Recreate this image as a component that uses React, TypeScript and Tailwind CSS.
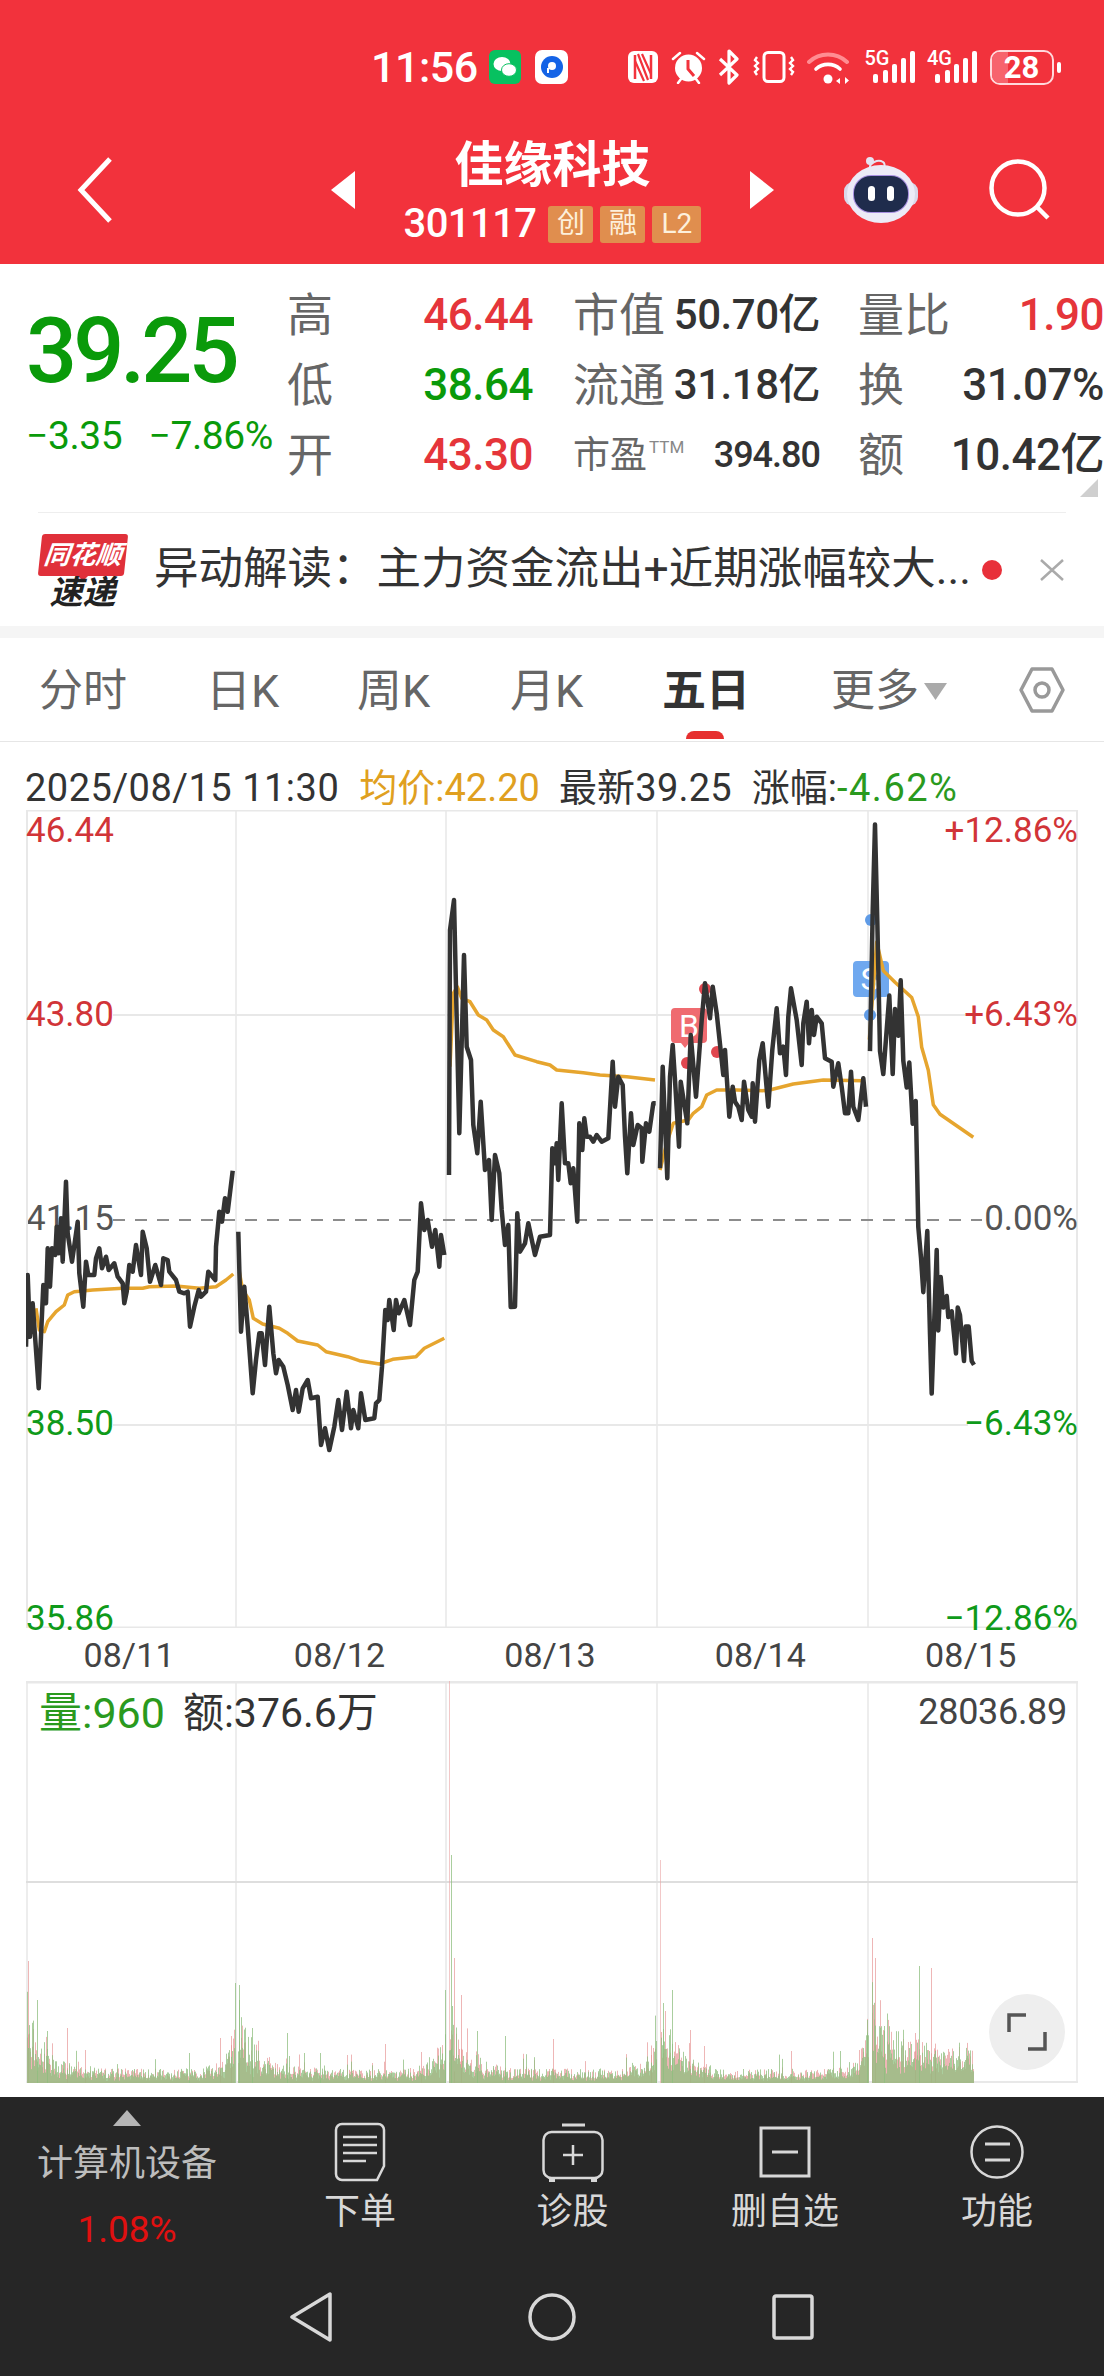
import React from "react"

const RED = "#f2323c"

// traced chart data, each block is in the pixel space of the crop it was read from
const day1 = [0,620,5,405,12,590,20,490,28,600,38,745,45,590,52,435,60,490,65,325,72,440,78,325,88,345,92,260,98,340,105,235,110,365,120,125,125,280,138,365,155,245,160,400,172,500,180,365,187,405,205,405,210,355,220,325,228,385,240,350,248,390,265,370,275,410,290,430,295,490,302,455,310,375,320,395,330,315,345,405,350,275,362,325,372,425,388,375,395,400,405,435,412,355,425,360,430,395,450,420,460,455,475,460,485,455,492,560,505,500,518,450,525,470,540,455,547,395,568,420,570,320,580,215,588,245,597,175,605,215,620,92]
const day2 = [637,275,645,575,655,440,665,560,680,760,690,660,700,580,707,580,717,675,730,500,742,640,750,700,758,660,772,680,785,735,800,810,810,750,818,815,830,745,845,720,855,775,875,770,885,915,897,865,910,930,925,860,937,780,948,870,962,755,975,865,982,810,997,865,1005,760,1018,840,1045,835,1050,790,1060,780,1068,680,1078,510,1085,540,1090,480,1103,570,1110,480,1118,520,1135,480,1152,555,1165,420,1175,395,1185,190,1195,270,1205,240,1218,320,1228,270,1240,380,1245,285,1255,345]
const day3 = [27,885,30,150,42,60,58,760,72,225,80,500,93,540,100,735,112,820,122,665,135,870,147,840,155,1020,165,825,178,880,185,990,195,1095,205,1035,212,1281,225,1280,232,1000,240,1115,255,1090,265,1030,285,1125,300,1070,330,1065,337,805,345,850,350,790,355,900,365,670,375,850,385,850,392,910,400,865,412,1025,418,730,427,810,433,715,440,770,450,770,460,785,470,765,485,785,505,775,518,545,525,680,535,590,548,615,555,770,562,880,573,700,580,795,593,735,605,745,607,845,618,730,628,755,640,670,647,670]
const day4 = [660,865,668,560,682,895,690,590,698,495,705,600,717,800,722,605,742,730,752,465,768,650,785,420,795,310,810,415,818,320,830,400,850,585,855,510,868,710,878,620,885,665,895,680,905,720,912,605,925,690,935,710,938,610,945,725,958,540,968,490,985,680,997,510,1010,385,1020,520,1030,500,1038,585,1045,410,1053,325,1070,420,1085,555,1090,430,1100,365,1107,490,1115,390,1122,465,1130,410,1145,430,1155,535,1175,545,1180,620,1195,550,1205,620,1215,700,1225,700,1233,575,1240,680,1255,720,1270,595,1278,680]
const day5 = [60,630,68,265,75,38,82,290,90,630,100,690,118,485,128,690,135,520,145,590,152,445,160,655,170,725,178,660,188,820,197,760,205,1090,213,1170,220,1260,232,1100,240,1370,245,1525,260,1150,265,1360,272,1220,280,1300,290,1270,295,1325,305,1310,318,1420,323,1300,330,1320,342,1440,347,1350,356,1350,365,1440,372,1450]

const avg1 = [30,505,40,570,55,575,65,545,90,515,115,495,125,465,145,455,200,450,290,445,350,445,370,440,450,438,520,445,570,440,600,420,622,402]
const avg2 = [640,395,650,450,670,480,682,535,710,552,760,565,785,580,815,603,875,615,900,635,965,650,1000,662,1060,672,1100,658,1170,650,1195,625,1255,595]
const avg3 = [30,560,40,340,52,320,65,355,90,365,115,405,140,420,160,450,190,470,225,525,290,545,330,555,350,570,430,578,480,585,560,590,645,600]
const avg4 = [660,870,680,790,700,730,745,720,760,700,785,680,800,645,830,630,890,630,980,632,1060,612,1150,600,1270,602]
const avg5 = [58,600,80,345,100,420,135,450,185,490,205,540,215,620,235,680,250,770,270,795,370,855]

const toPoints = (pts: number[], ox: number, oy: number, sx: number, sy: number) => {
  const out: string[] = []
  for (let i = 0; i < pts.length; i += 2) {
    out.push(`${(ox + pts[i] / sx).toFixed(1)},${(oy + pts[i + 1] / sy).toFixed(1)}`)
  }
  return out.join(" ")
}

const priceLines = [
  toPoints(day1, 26, 1140, 3, 3),
  toPoints(day2, 26, 1140, 3, 3),
  toPoints(day3, 440, 880, 3, 3),
  toPoints(day4, 440, 880, 3, 3),
  toPoints(day5, 850, 810, 3, 2.613),
]
const avgLines = [
  toPoints(avg1, 26, 1140, 3, 3),
  toPoints(avg2, 26, 1140, 3, 3),
  toPoints(avg3, 440, 880, 3, 3),
  toPoints(avg4, 440, 880, 3, 3),
  toPoints(avg5, 850, 810, 3, 2.613),
]

// big volume bars read off the reference: x, height, red?
const spikes: [number, number, boolean][] = [
  [28, 122, true], [37, 83, false], [47, 52, false], [67, 55, true], [85, 33, true], [189, 30, false], [220, 45, true], [231, 47, true],
  [235, 100, false], [239, 98, false], [252, 55, false], [287, 50, false], [320, 30, false], [385, 39, true], [421, 31, true], [445, 93, false],
  [451, 228, false], [454, 125, true], [461, 88, true], [477, 52, false], [505, 47, false], [553, 44, true], [651, 28, true],
  [656, 42, false], [663, 80, false], [672, 93, false], [690, 53, true], [704, 37, true], [791, 32, true], [859, 33, true],
  [867, 63, false], [872, 145, true], [875, 125, true], [884, 57, false], [915, 50, true], [919, 117, false], [931, 115, true], [935, 33, true],
]

const buildVolume = () => {
  let seed = 41
  const rnd = () => {
    seed = (seed * 1103515245 + 12345) & 0x7fffffff
    return seed / 0x7fffffff
  }
  const dayStarts = [27, 238, 449, 661, 872]
  let green = ""
  let red = ""
  for (let x = 27; x < 974; x++) {
    const idx = x < 238 ? 0 : x < 449 ? 1 : x < 661 ? 2 : x < 872 ? 3 : 4
    const start = dayStarts[idx]
    const end = start + 207
    if (x > end && idx < 4) continue
    const open = 48 * Math.exp(-(x - start) / 16)
    const close = idx < 4 ? 26 * Math.exp(-(end - x) / 10) : 16
    const bump = rnd() > 0.93 ? 10 : 0
    const h = (9 + bump + open + close) * (0.5 + rnd() * 1.1)
    const h2 = h * (0.4 + rnd() * 0.5)
    const seg = `M${x + 0.5} 2083V${(2083 - h).toFixed(1)}`
    const seg2 = `M${x + 0.5} 2083V${(2083 - h2).toFixed(1)}`
    if (rnd() > 0.45) {
      green += seg
      red += seg2
    } else {
      red += seg
      green += seg2
    }
  }
  spikes.forEach(([x, h, isRed]) => {
    const seg = `M${x + 0.5} 2083V${2083 - h}`
    if (isRed) red += seg
    else green += seg
  })
  return { green, red }
}
const volume = buildVolume()

const NfcIcon = () => (
  <svg width="30" height="32" viewBox="0 0 30 32">
    <rect width="30" height="32" rx="6" fill="#fff" />
    <path d="M7 4v24M23 4v24" stroke={RED} strokeWidth="2.5" />
    <path d="M10 3l10 26M14 3l9 20M7 10l9 20" stroke={RED} strokeWidth="2.2" />
  </svg>
)

const AlarmIcon = () => (
  <svg width="35" height="34" viewBox="0 0 35 34">
    <circle cx="17.5" cy="18" r="13.5" fill="#fff" />
    <path d="M17 10v9l6 7" fill="none" stroke={RED} strokeWidth="3" />
    <path d="M2 9l7-6M33 9l-7-6M7 33l3-4M28 33l-3-4" stroke="#fff" strokeWidth="2.5" strokeLinecap="round" />
  </svg>
)

const BluetoothIcon = () => (
  <svg width="22" height="36" viewBox="0 0 22 36">
    <path d="M2 10l17 16-8 8V2l8 8L2 26" fill="none" stroke="#fff" strokeWidth="3.2" strokeLinejoin="round" />
  </svg>
)

const VibrateIcon = () => (
  <svg width="42" height="32" viewBox="0 0 42 32">
    <rect x="11" y="1.5" width="20" height="29" rx="4" fill="none" stroke="#fff" strokeWidth="3" />
    <path d="M4 6l-2 3 3 3-3 3 3 3-3 3 2 3M38 6l2 3-3 3 3 3-3 3 3 3-2 3" fill="none" stroke="#fff" strokeWidth="2.4" />
  </svg>
)

const WifiIcon = () => (
  <svg width="45" height="34" viewBox="0 0 45 34">
    <path d="M2 12a28 28 0 0 1 38 0" fill="none" stroke="#ff8d92" strokeWidth="4" strokeLinecap="round" />
    <path d="M9 19a18 18 0 0 1 24 0" fill="none" stroke="#fff" strokeWidth="3.6" strokeLinecap="round" />
    <circle cx="21" cy="29" r="4.5" fill="#fff" />
    <path d="M33 28l-4 3 4 3zM38 34v-7l4 3.500z" fill="#fff" />
  </svg>
)

const Signal = ({ label }: { label: string }) => (
  <div className="relative w-[50px] h-[34px]">
    <span className="absolute left-0 -top-[1px] text-[20px] leading-[18px] font-medium text-white">{label}</span>
    <svg width="50" height="34" viewBox="0 0 50 34" className="absolute inset-0">
      <rect x="8" y="24" width="5" height="9" rx="2" fill="#fff" />
      <rect x="18" y="20" width="5" height="13" rx="2" fill="#fff" />
      <rect x="27" y="14" width="5" height="19" rx="2" fill="#fff" />
      <rect x="36" y="8" width="5" height="25" rx="2" fill="#fff" />
      <rect x="45" y="1" width="5" height="32" rx="2" fill="#fff" />
    </svg>
  </div>
)

const Battery = () => (
  <div className="flex items-center gap-[3px]">
    <div className="relative w-[64px] h-[35px] rounded-[10px] border-2 border-[#ffd9dc] overflow-hidden flex items-center justify-center">
      <div className="absolute left-0 top-0 bottom-0 w-[28%] bg-[#f7636d]" />
      <span className="relative text-[31px] leading-none font-bold text-white">28</span>
    </div>
    <div className="w-[4px] h-[11px] rounded-full bg-white" />
  </div>
)

const Robot = () => (
  <svg width="74" height="68" viewBox="0 0 74 68">
    <path d="M26 12c-1-5 8-9 13-6 2 1 2 4 1 8" fill="none" stroke="#e6e4f2" strokeWidth="2" />
    <circle cx="26" cy="5" r="4" fill="#e6e4f2" />
    <rect x="0" y="26" width="74" height="24" rx="9" fill="#d9d8ea" />
    <ellipse cx="37" cy="38" rx="34" ry="29" fill="#ecebf7" />
    <rect x="9" y="19" width="56" height="38" rx="18" fill="#a78fe0" />
    <rect x="10" y="20" width="54" height="36" rx="17" fill="#1f2c4c" />
    <rect x="24" y="30" width="7" height="15" rx="3.500" fill="#fff" />
    <rect x="43" y="30" width="7" height="15" rx="3.500" fill="#fff" />
  </svg>
)

const Triangle = ({ right }: { right?: boolean }) => (
  <svg width="24" height="38" viewBox="0 0 24 38">
    <path d={right ? "M0 0L24 19L0 38z" : "M24 0L0 19L24 38z"} fill="#fff" />
  </svg>
)

const Badge = ({ text, w }: { text: string; w: string }) => (
  <span className={`${w} h-[37px] rounded-[3px] bg-[#e08e4e] text-[#fdf0dc] text-[28px] leading-none flex items-center justify-center`}>{text}</span>
)

const Header = () => (
  <div className="h-[264px] bg-[#f2323c] text-white">
    <div className="flex items-center h-[34px] mt-[50px] pl-[371px] absolute top-0 left-0">
      <span className="text-[43px] leading-none font-medium w-[107px] tracking-[-0.5px]">11:56</span>
      <div className="ml-[11px] w-[32px] h-[34px] rounded-[6px] bg-[#07c160] flex items-center justify-center">
        <svg width="24" height="22" viewBox="0 0 24 22">
          <ellipse cx="9" cy="8" rx="8.500" ry="7" fill="#fff" />
          <ellipse cx="16" cy="14" rx="7.500" ry="6.300" fill="#fff" stroke="#07c160" strokeWidth="1" />
        </svg>
      </div>
      <div className="ml-[14px] w-[33px] h-[34px] rounded-[7px] bg-white flex items-center justify-center">
        <svg width="24" height="24" viewBox="0 0 24 24">
          <circle cx="12" cy="12" r="11" fill="#1463e6" />
          <circle cx="12" cy="11" r="4" fill="#fff" />
          <path d="M8 13v5" stroke="#fff" strokeWidth="2" />
        </svg>
      </div>
      <div className="ml-[60px] flex items-center gap-[12.500px]">
        <NfcIcon />
        <AlarmIcon />
        <BluetoothIcon />
        <VibrateIcon />
        <WifiIcon />
        <Signal label="5G" />
        <Signal label="4G" />
        <Battery />
      </div>
    </div>
    <div className="flex items-center pt-[136px]">
      <svg width="36" height="66" viewBox="0 0 36 66" className="ml-[77px]">
        <path d="M33 2L4 33L33 64" fill="none" stroke="#fff" strokeWidth="5" />
      </svg>
      <div className="ml-[218px]">
        <Triangle />
      </div>
      <div className="w-[395px] flex flex-col items-center">
        <div className="text-[49px] leading-[60px] font-bold">佳缘科技</div>
        <div className="flex items-center mt-[8px]">
          <span className="text-[40px] leading-[40px] font-medium tracking-[-0.6px] mr-[12px]">301117</span>
          <div className="flex gap-[7px]">
            <Badge text="创" w="w-[45px]" />
            <Badge text="融" w="w-[45px]" />
            <Badge text="L2" w="w-[49px]" />
          </div>
        </div>
      </div>
      <Triangle right />
      <div className="ml-[70px]">
        <Robot />
      </div>
      <svg width="62" height="62" viewBox="0 0 62 62" className="ml-[71px]">
        <circle cx="29" cy="29" r="26.500" fill="none" stroke="#fff" strokeWidth="4.500" />
        <path d="M47 47l12 12" stroke="#fff" strokeWidth="4.500" />
      </svg>
    </div>
  </div>
)

const Cell = ({ label, value, valueCls, labelCls }: { label: React.ReactNode; value: string; valueCls: string; labelCls?: string }) => (
  <div className="flex items-center justify-between h-[70px]">
    <span className={labelCls ?? "text-[46px] leading-none text-[#666]"}>{label}</span>
    <span className={valueCls}>{value}</span>
  </div>
)

const red = "text-[44px] leading-none font-medium text-[#e5353a] tracking-[-0.5px]"
const green = "text-[44px] leading-none font-medium text-[#0a9a0a] tracking-[-0.5px]"
const dark = "text-[42px] leading-none text-[#333] font-medium tracking-[-0.5px]"
const darkWide = "text-[44px] leading-none text-[#333] font-medium tracking-[-0.5px]"

const Quote = () => (
  <div className="relative h-[248px] flex">
    <div className="w-[287px] pl-[26px] pt-[43px]">
      <div className="text-[90px] leading-none font-medium text-[#0a9a0a] tracking-[-4px]">39.25</div>
      <div className="flex justify-between w-[247px] mt-[20px] text-[39px] leading-none text-[#0a9a0a] tracking-[-0.4px]">
        <span>−3.35</span>
        <span>−7.86%</span>
      </div>
    </div>
    <div className="pt-[16px] flex">
      <div className="w-[246px]">
        <Cell label="高" value="46.44" valueCls={red} />
        <Cell label="低" value="38.64" valueCls={green} />
        <Cell label="开" value="43.30" valueCls={red} />
      </div>
      <div className="w-[247px] ml-[40px]">
        <Cell label="市值" value="50.70亿" valueCls={dark} />
        <Cell label="流通" value="31.18亿" valueCls={dark} />
        <Cell
          label={
            <span className="flex items-start">
              <span className="text-[37px] leading-none text-[#666]">市盈</span>
              <span className="text-[17px] leading-none text-[#888] ml-[2px] mt-[2px]">TTM</span>
            </span>
          }
          value="394.80"
          valueCls="text-[36px] leading-none text-[#333] font-medium tracking-[-1px]"
        />
      </div>
      <div className="w-[246px] ml-[38px]">
        <Cell label="量比" value="1.90" valueCls={red} />
        <Cell label="换" value="31.07%" valueCls={darkWide} />
        <Cell label="额" value="10.42亿" valueCls={darkWide} />
      </div>
    </div>
    <svg width="18" height="18" viewBox="0 0 18 18" className="absolute right-[6px] bottom-[15px]">
      <path d="M18 0V18H0z" fill="#cfcfcf" />
    </svg>
  </div>
)

const Ticker = () => (
  <div className="h-[113px] flex items-center pl-[38px] relative">
    <div className="w-[89px] h-[72px] flex flex-col items-center">
      <div className="w-[86px] h-[42px] -skew-x-[6deg] rounded-[3px] bg-[#e0303a] text-white text-[26px] leading-[42px] font-bold italic text-center whitespace-nowrap">同花顺</div>
      <div className="w-0 h-0 border-x-[5px] border-x-transparent border-t-[5px] border-t-[#e0303a]" />
      <div className="text-[33px] leading-[30px] font-bold italic text-[#222] -mt-[3px] whitespace-nowrap">速递</div>
    </div>
    <span className="ml-[27px] text-[44.500px] leading-none text-[#333] whitespace-nowrap w-[813px]">异动解读：主力资金流出+近期涨幅较大...</span>
    <div className="ml-[15px] w-[20px] h-[20px] rounded-full bg-[#e8303a]" />
    <svg width="26" height="24" viewBox="0 0 26 24" className="ml-[37px]">
      <path d="M2 2l22 20M24 2L2 22" stroke="#aaa" strokeWidth="2.500" />
    </svg>
  </div>
)

const Tabs = () => (
  <div className="h-[104px] flex items-start border-b border-[#e6e6e6]">
    <span className="ml-[39px] w-[167px] mt-[31px] text-[44px] leading-none text-[#666]">分时</span>
    <span className="w-[151px] mt-[31px] text-[45px] leading-none text-[#666]">日K</span>
    <span className="w-[153px] mt-[31px] text-[45px] leading-none text-[#666]">周K</span>
    <span className="w-[152px] mt-[31px] text-[45px] leading-none text-[#666]">月K</span>
    <div className="w-[169px] mt-[31px] flex flex-col items-start">
      <span className="text-[44px] leading-none font-bold text-[#333]">五日</span>
      <div className="ml-[24px] mt-[18px] w-[38px] h-[8px] rounded-t-full rounded-b-[2px] bg-[#e6302f]" />
    </div>
    <span className="mt-[31px] text-[44px] leading-none text-[#666]">更多</span>
    <svg width="23" height="17" viewBox="0 0 23 17" className="ml-[5px] mt-[45px]">
      <path d="M0 0H23L11.500 17z" fill="#aaa" />
    </svg>
    <svg width="46" height="48" viewBox="0 0 46 48" className="ml-[72px] mt-[28px]">
      <path d="M13 3H33L44 24L33 45H13L2 24z" fill="none" stroke="#999" strokeWidth="3.500" strokeLinejoin="round" />
      <circle cx="23" cy="24" r="7" fill="none" stroke="#999" strokeWidth="3.500" />
    </svg>
  </div>
)

const InfoRow = () => (
  <div className="h-[68px] pl-[25px] pt-[27px] flex text-[38px] leading-none text-[#333] whitespace-nowrap">
    <span className="tracking-[0.5px]">2025/08/15 11:30</span>
    <span className="ml-[20px] text-[#e0a020]">均价:42.20</span>
    <span className="ml-[19px] tracking-[0.2px]">最新39.25</span>
    <span className="ml-[20px]">涨幅:<span className="text-[#2a9a1e] tracking-[1.500px]">-4.62%</span></span>
  </div>
)

const axisCls = "absolute z-10 text-[35px] leading-none"

const PriceChart = () => (
  <div className="relative ml-[26px] w-[1052px] h-[818px]">
    <span className={`${axisCls} left-0 top-[3px] text-[#d13438]`}>46.44</span>
    <span className={`${axisCls} left-0 top-[187px] text-[#d13438]`}>43.80</span>
    <span className="absolute left-0 top-[391px] text-[35px] leading-none text-[#555]">41.15</span>
    <span className={`${axisCls} left-0 top-[596px] text-[#0f9a1a]`}>38.50</span>
    <span className={`${axisCls} left-0 top-[791px] text-[#0f9a1a]`}>35.86</span>
    <span className={`${axisCls} right-0 top-[3px] text-[#d13438]`}>+12.86%</span>
    <span className={`${axisCls} right-0 top-[187px] text-[#d13438]`}>+6.43%</span>
    <span className={`${axisCls} right-0 top-[391px] text-[#555]`}>0.00%</span>
    <span className={`${axisCls} right-0 top-[596px] text-[#0f9a1a]`}>−6.43%</span>
    <span className={`${axisCls} right-0 top-[791px] text-[#0f9a1a]`}>−12.86%</span>
    <svg width="1052" height="818" viewBox="26 810 1052 818" className="absolute inset-0">
      <g stroke="#e8e8e8" strokeWidth="2" fill="none">
        <path d="M27 810V1628M1077 810V1628" />
        <path d="M26 810H1078" strokeWidth="3" />
        <path d="M26 1628H1078" strokeWidth="3" />
        <path d="M236 810V1628M446 810V1628M657 810V1628M868 810V1628" strokeWidth="1.500" />
        <path d="M113 1015H965M113 1425H968" />
      </g>
      <path d="M113 1220H982" stroke="#8c8c8c" strokeWidth="2" strokeDasharray="12 10" />
      <path d="M675 1008h28a4 4 0 0 1 4 4v27a4 4 0 0 1-4 4h-14l-4 5-4-5h-6a4 4 0 0 1-4-4v-27a4 4 0 0 1 4-4z" fill="#ef6b70" />
      <text x="689" y="1037" fontSize="32" fill="#fff" textAnchor="middle" fontFamily="Roboto, sans-serif">B</text>
      <circle cx="687" cy="1063" r="6" fill="#e0474f" />
      <circle cx="717" cy="1052" r="6" fill="#e0474f" />
      <circle cx="705" cy="989" r="6" fill="#e0474f" />
      <path d="M857 961h28a4 4 0 0 1 4 4v28a4 4 0 0 1-4 4h-8l-4 5-4-5h-12a4 4 0 0 1-4-4v-28a4 4 0 0 1 4-4z" fill="#6fa8ef" />
      <text x="870" y="990" fontSize="32" fill="#fff" textAnchor="middle" fontFamily="Roboto, sans-serif">S</text>
      <circle cx="871" cy="920" r="6" fill="#5f9be6" />
      <circle cx="870" cy="1015" r="6" fill="#5f9be6" />
      {avgLines.map((pts, i) => (
        <polyline key={i} points={pts} fill="none" stroke="#e6a52e" strokeWidth="3.500" strokeLinejoin="round" />
      ))}
      {priceLines.map((pts, i) => (
        <polyline key={i} points={pts} fill="none" stroke="#333" strokeWidth="4.500" strokeLinejoin="round" />
      ))}
    </svg>
  </div>
)

const DateAxis = () => (
  <div className="ml-[24px] w-[1052px] h-[53px] grid grid-cols-5 items-center text-center text-[34px] leading-none text-[#444] tracking-[0.2px]">
    <span>08/11</span>
    <span>08/12</span>
    <span>08/13</span>
    <span>08/14</span>
    <span>08/15</span>
  </div>
)

const VolumeChart = () => (
  <div className="relative ml-[26px] w-[1052px] h-[402px]">
    <svg width="1052" height="402" viewBox="26 1681 1052 402" className="absolute inset-0">
      <g stroke="#e8e8e8" strokeWidth="1.500" fill="none">
        <path d="M27 1681V2083M1077 1681V2083M236 1681V2083M446 1681V2083M657 1681V2083M868 1681V2083" />
        <path d="M26 1682H1078" strokeWidth="3" />
        <path d="M26 1882H1078" stroke="#dedede" strokeWidth="2" />
        <path d="M26 2082H1078" strokeWidth="2" />
      </g>
      <path d="M449.500 2083V1681M660.500 2083V1860" stroke="#eaa3a3" strokeOpacity="0.6" strokeWidth="1" fill="none" />
      <path d={volume.red} stroke="#e58f8f" strokeOpacity="0.65" strokeWidth="1" fill="none" />
      <path d={volume.green} stroke="#8dbd7e" strokeOpacity="0.75" strokeWidth="1" fill="none" />
    </svg>
    <div className="absolute left-[13px] top-[11px] flex items-center leading-none whitespace-nowrap">
      <span className="text-[43px] leading-none text-[#2a9a1e]">量:960</span>
      <span className="ml-[18px] text-[41px] leading-none text-[#333]">额:376.6万</span>
    </div>
    <span className="absolute right-[11px] top-[13px] text-[36px] leading-none text-[#444] tracking-[-0.3px]">28036.89</span>
    <div className="absolute right-[13px] bottom-[13px] w-[76px] h-[76px] rounded-full bg-[#eeeeee] flex items-center justify-center">
      <svg width="40" height="40" viewBox="0 0 40 40">
        <path d="M2 20V3H19M38 20V37H21" fill="none" stroke="#555" strokeWidth="3.500" />
      </svg>
    </div>
  </div>
)

const actionLabel = "mt-[12px] text-[36px] leading-none text-[#d8d8d8] whitespace-nowrap"

const BottomBar = () => (
  <div className="mt-[14px] h-[279px] bg-[#262626]">
    <div className="grid grid-cols-[254px_212px_213px_212px_212px] h-[165px]">
      <div className="flex flex-col items-center pt-[13px]">
        <svg width="28" height="16" viewBox="0 0 28 16">
          <path d="M14 0L28 16H0z" fill="#b5b5b5" />
        </svg>
        <span className="mt-[20px] text-[36px] leading-none text-[#bdbdbd]">计算机设备</span>
        <span className="mt-[29px] text-[37px] leading-none text-[#e01010]">1.08%</span>
      </div>
      <div className="flex flex-col items-center pt-[25px]">
        <svg width="52" height="60" viewBox="0 0 52 60">
          <path d="M8 2H44a6 6 0 0 1 6 6V44L43 58H8a6 6 0 0 1-6-6V8a6 6 0 0 1 6-6z" fill="none" stroke="#d8d8d8" strokeWidth="2.500" />
          <path d="M9 15H43M9 23H43M9 31H43M9 39H32" stroke="#d8d8d8" strokeWidth="2.500" />
        </svg>
        <span className={actionLabel}>下单</span>
      </div>
      <div className="flex flex-col items-center pt-[25px]">
        <svg width="62" height="60" viewBox="0 0 62 60">
          <rect x="1.500" y="10" width="59" height="46" rx="8" fill="none" stroke="#d8d8d8" strokeWidth="2.500" />
          <path d="M20 3H43" stroke="#d8d8d8" strokeWidth="3" />
          <path d="M31 23V43M21 33H41" stroke="#d8d8d8" strokeWidth="2.500" />
          <path d="M10 56v4M52 56v4" stroke="#d8d8d8" strokeWidth="6" />
        </svg>
        <span className={actionLabel}>诊股</span>
      </div>
      <div className="flex flex-col items-center pt-[25px]">
        <svg width="52" height="60" viewBox="0 0 52 60">
          <rect x="2" y="6" width="48" height="48" fill="none" stroke="#d8d8d8" strokeWidth="3" />
          <path d="M13 30H39" stroke="#d8d8d8" strokeWidth="3" />
        </svg>
        <span className={actionLabel}>删自选</span>
      </div>
      <div className="flex flex-col items-center pt-[25px]">
        <svg width="54" height="60" viewBox="0 0 54 60">
          <circle cx="27" cy="30" r="25.500" fill="none" stroke="#d8d8d8" strokeWidth="2.500" />
          <path d="M15 22H40M15 38H40" stroke="#d8d8d8" strokeWidth="3" />
        </svg>
        <span className={actionLabel}>功能</span>
      </div>
    </div>
    <div className="mt-[30px] flex justify-center gap-[196px] items-center">
      <svg width="42" height="50" viewBox="0 0 42 50">
        <path d="M40 2V48L2 25z" fill="none" stroke="#d8d8d8" strokeWidth="3.500" strokeLinejoin="round" />
      </svg>
      <svg width="48" height="50" viewBox="0 0 48 50">
        <circle cx="24" cy="25" r="22" fill="none" stroke="#d8d8d8" strokeWidth="3.500" />
      </svg>
      <svg width="42" height="46" viewBox="0 0 42 46">
        <rect x="2" y="2" width="38" height="42" rx="2" fill="none" stroke="#d8d8d8" strokeWidth="3.500" />
      </svg>
    </div>
  </div>
)

export default function App() {
  return (
    <div className="relative w-[1104px] h-[2376px] overflow-hidden bg-white font-[Roboto,'Noto_Sans_CJK_SC',sans-serif]">
      <Header />
      <Quote />
      <div className="mx-[38px] border-t border-[#eeeeee]" />
      <Ticker />
      <div className="h-[12px] bg-[#f5f5f5]" />
      <Tabs />
      <InfoRow />
      <PriceChart />
      <DateAxis />
      <VolumeChart />
      <BottomBar />
    </div>
  )
}
